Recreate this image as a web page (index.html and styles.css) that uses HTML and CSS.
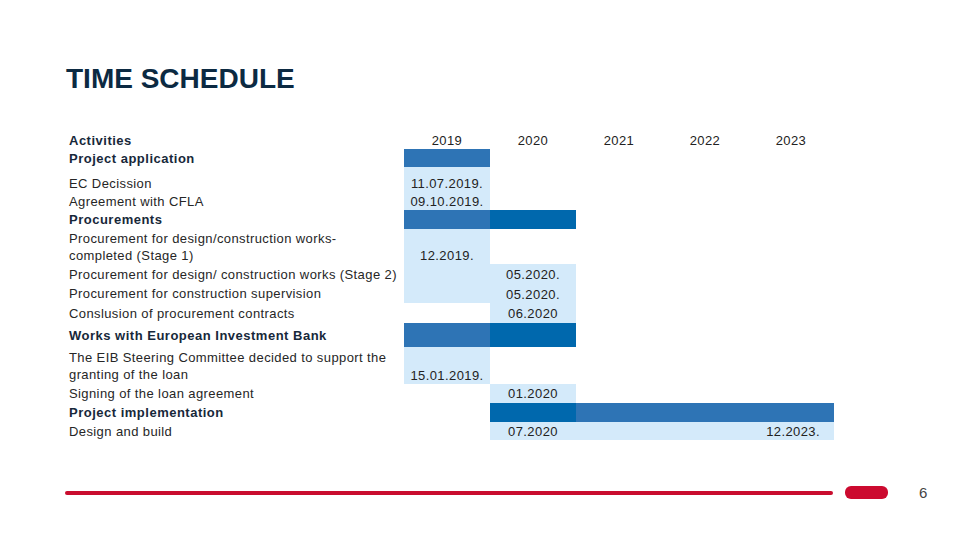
FILE: index.html
```html
<!DOCTYPE html>
<html lang="en">
<head>
<meta charset="utf-8">
<title>Time Schedule</title>
<link rel="stylesheet" href="styles.css">
</head>
<body>
<div class="slide">
  <h1 class="title">TIME SCHEDULE</h1>
  <div class="schedule">
    <!-- header -->
    <div class="label bold">Activities</div>
    <div class="year">2019</div><div class="year">2020</div><div class="year">2021</div><div class="year">2022</div><div class="year">2023</div>
    <!-- project application -->
    <div class="label bold">Project application</div>
    <div class="bar"></div><div></div><div></div><div></div><div></div>
    <!-- EC -->
    <div class="label end">EC Decission</div>
    <div class="light date end">11.07.2019.</div><div></div><div></div><div></div><div></div>
    <!-- CFLA -->
    <div class="label">Agreement with CFLA</div>
    <div class="light date">09.10.2019.</div><div></div><div></div><div></div><div></div>
    <!-- procurements -->
    <div class="label bold">Procurements</div>
    <div class="bar"></div><div class="bar deep"></div><div></div><div></div><div></div>
    <!-- stage 1 -->
    <div class="label multi">Procurement for design/construction works-<br>completed (Stage 1)</div>
    <div class="light date end">12.2019.</div><div></div><div></div><div></div><div></div>
    <!-- stage 2 -->
    <div class="label">Procurement for design/ construction works (Stage 2)</div>
    <div class="light"></div><div class="light date">05.2020.</div><div></div><div></div><div></div>
    <!-- supervision -->
    <div class="label">Procurement for construction supervision</div>
    <div class="light"></div><div class="light date low">05.2020.</div><div></div><div></div><div></div>
    <!-- contracts -->
    <div class="label">Conslusion of procurement contracts</div>
    <div></div><div class="light date">06.2020</div><div></div><div></div><div></div>
    <!-- EIB -->
    <div class="label bold">Works with European Investment Bank</div>
    <div class="bar"></div><div class="bar deep"></div><div></div><div></div><div></div>
    <!-- steering -->
    <div class="label multi">The EIB Steering Committee decided to support the<br>granting of the loan</div>
    <div class="light date end">15.01.2019.</div><div></div><div></div><div></div><div></div>
    <!-- signing -->
    <div class="label">Signing of the loan agreement</div>
    <div></div><div class="light date">01.2020</div><div></div><div></div><div></div>
    <!-- implementation -->
    <div class="label bold">Project implementation</div>
    <div></div><div class="bar deep"></div><div class="bar"></div><div class="bar"></div><div class="bar"></div>
    <!-- design and build -->
    <div class="label">Design and build</div>
    <div></div><div class="light date">07.2020</div><div class="light"></div><div class="light"></div><div class="light date right">12.2023.</div>
  </div>
  <footer class="footer">
    <div class="rule"></div>
    <div class="pill"></div>
    <span class="page">6</span>
  </footer>
</div>
</body>
</html>
```

FILE: styles.css
```css
* { box-sizing: border-box; }
html, body { margin: 0; padding: 0; background: #ffffff; }
body {
  width: 960px;
  height: 540px;
  overflow: hidden;
  font-family: "Liberation Sans", Arial, sans-serif;
  color: #222222;
}
.slide {
  padding: 63px 0 0 67px;
  height: 540px;
}
.title {
  margin: 0 0 0 -1px;
  font-size: 28px;
  line-height: 32px;
  font-weight: bold;
  color: #0c2a42;
  letter-spacing: 0;
}
.schedule {
  margin-top: 36px;
  display: grid;
  grid-template-columns: 337px repeat(5, 86px);
  grid-template-rows: 18px 18px 25px 18px 19px 35px 20px 19px 20px 24px 37px 19px 19px 18px;
  font-size: 13px;
  letter-spacing: 0.4px;
}
.schedule > div {
  display: flex;
  align-items: center;
  white-space: nowrap;
}
.label {
  padding-left: 2px;
  line-height: 17px;
  color: #262626;
}
.label.bold {
  font-weight: bold;
  color: #17283a;
  letter-spacing: 0.5px;
}
.label.multi { line-height: 17px; }
.schedule > .end { align-items: flex-end; }
.year {
  justify-content: center;
  color: #222222;
}
.bar { background: #2e74b5; }
.bar.deep { background: #0068ad; }
.light { background: #d4eafa; }
.date {
  justify-content: center;
  line-height: 17px;
  color: #222222;
}
.schedule > .date.low { align-items: flex-end; }
.date.right { justify-content: flex-end; padding-right: 14px; }
.footer {
  margin-top: 44px;
  display: flex;
  align-items: center;
  width: 870px;
  margin-left: -2px;
}
.rule {
  flex: 0 0 768px;
  height: 4px;
  background: #c90d2e;
  border-radius: 2px;
}
.pill {
  margin-left: 12px;
  width: 43px;
  height: 13px;
  border-radius: 6px;
  background: #cc0a2f;
}
.page {
  margin-left: 31px;
  font-size: 15px;
  color: #444444;
}
```
